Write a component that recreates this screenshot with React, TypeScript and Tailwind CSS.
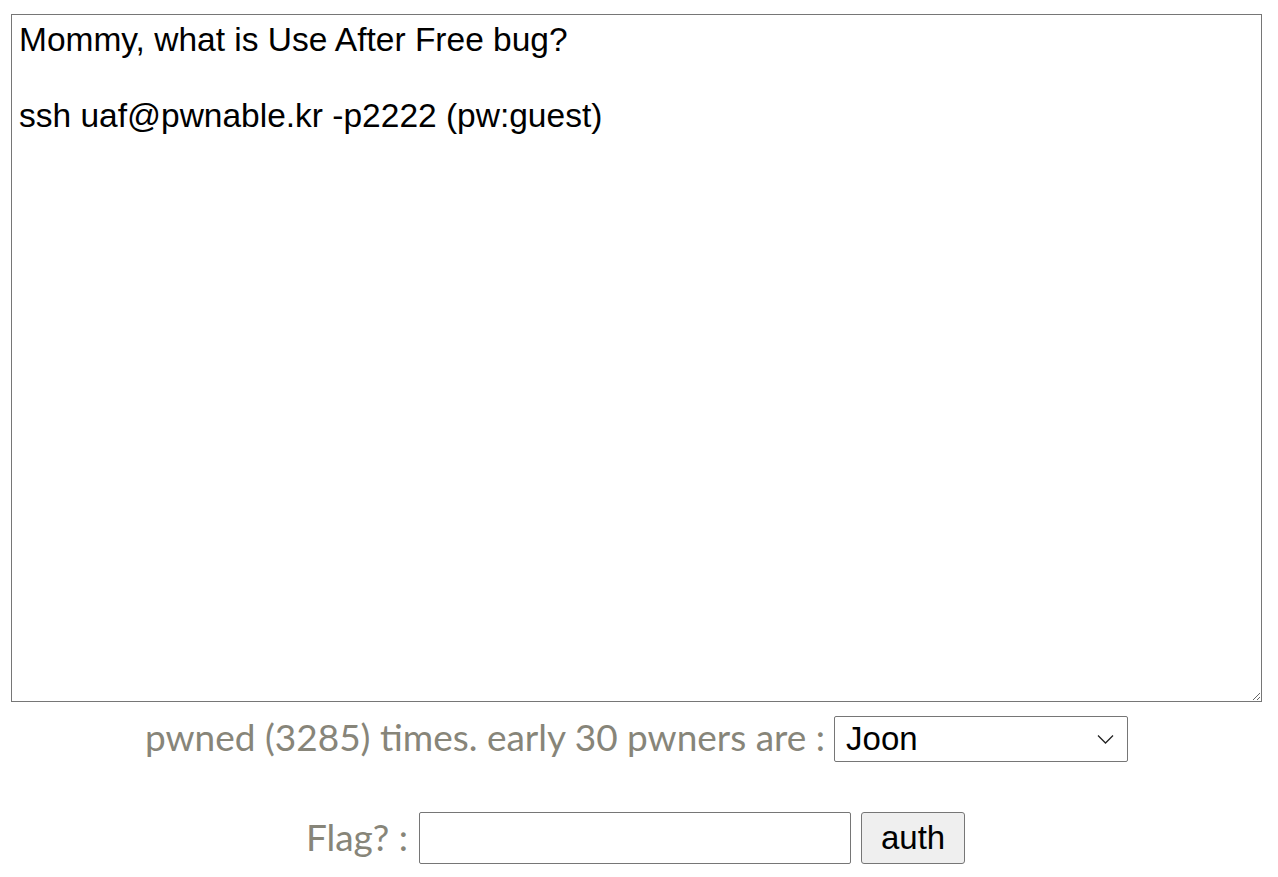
import { useState } from "react"

const pwners = ["Joon", "daehee", "lokihardt", "mongii", "s0ngsari"]

function Chevron() {
  return (
    <svg width="17" height="10" viewBox="0 0 17 10" fill="none" className="pointer-events-none absolute right-[14px] top-1/2 -translate-y-1/2">
      <path d="M1 1.5 L8.5 9 L16 1.5" stroke="#222" strokeWidth="1.3" />
    </svg>
  )
}

export default function App() {
  const [flag, setFlag] = useState("")

  return (
    <div className="min-h-screen bg-white pt-[14px] font-['Liberation_Sans',Arial,sans-serif]">
      <div className="ml-[11px] w-[1251px]">
        <textarea
          readOnly
          className="block h-[688px] w-full resize-y border border-[#767676] px-[7px] pt-[6px] pb-[4px] text-[33.5px] leading-[38px] text-black outline-none"
          defaultValue={"Mommy, what is Use After Free bug?\n\nssh uaf@pwnable.kr -p2222 (pw:guest)"}
        />

        <div className="mt-[14px] flex h-[46px] items-center justify-center">
          <span className="mr-[9px] pb-[4px] font-['Lato','Open_Sans',sans-serif] text-[37px] leading-[46px] text-[#878579]">
            pwned (3285) times. early 30 pwners are :
          </span>
          <div className="relative">
            <select className="h-[46px] w-[294px] appearance-none rounded-[2px] border border-[#767676] bg-white pl-[11px] text-[33px] leading-[44px] text-black outline-none">
              {pwners.map((p) => (
                <option key={p}>{p}</option>
              ))}
            </select>
            <Chevron />
          </div>
        </div>

        <div className="mt-[50px] flex h-[52px] items-center justify-center pr-[2px]">
          <span className="mr-[11px] pb-[2px] font-['Lato','Open_Sans',sans-serif] text-[37px] leading-[52px] text-[#878579]">Flag? :</span>
          <input
            value={flag}
            onChange={(e) => setFlag(e.target.value)}
            className="h-[52px] w-[432px] rounded-[2px] border border-[#767676] px-2 text-[33px] outline-none"
          />
          <button className="ml-[10px] h-[52px] w-[104px] rounded-[3px] border border-[#767676] bg-[#efefef] text-[33px] leading-[50px] text-black">
            auth
          </button>
        </div>
      </div>
    </div>
  )
}
